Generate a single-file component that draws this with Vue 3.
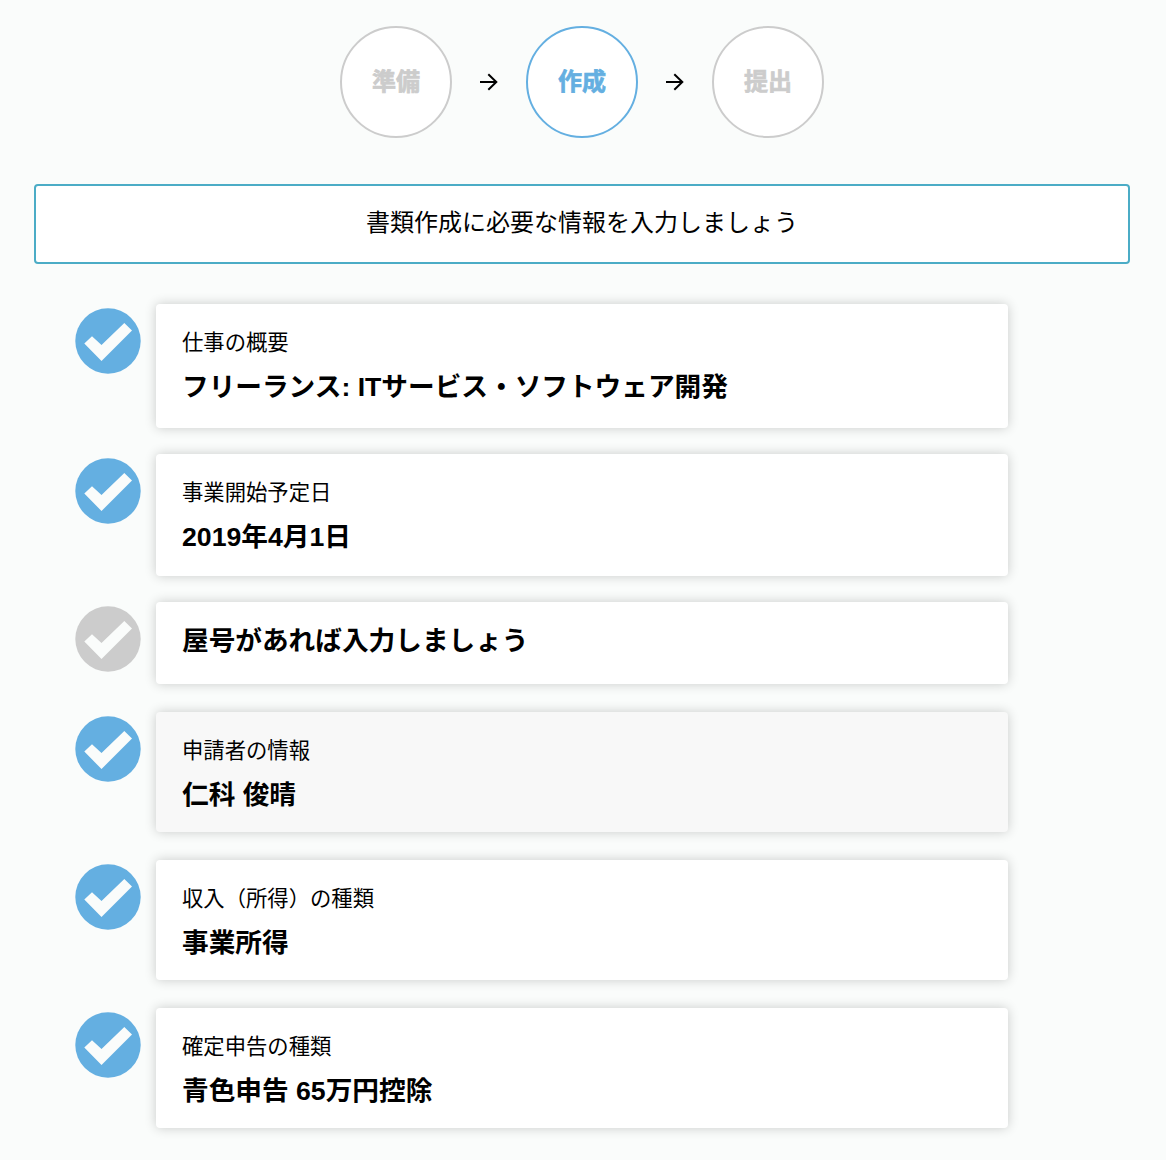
<script setup>
const steps = [
    { name: '準備', active: false },
    { name: '作成', active: true },
    { name: '提出', active: false },
];

// height: card height, gap: space to the next card
const items = [
    { label: '仕事の概要', value: 'フリーランス: ITサービス・ソフトウェア開発', done: true, height: 124, gap: 26 },
    { label: '事業開始予定日', value: '2019年4月1日', done: true, height: 122, gap: 26 },
    { label: '', value: '屋号があれば入力しましょう', done: false, height: 82, gap: 28 },
    { label: '申請者の情報', value: '仁科 俊晴', done: true, hover: true, height: 120, gap: 28 },
    { label: '収入（所得）の種類', value: '事業所得', done: true, height: 120, gap: 28 },
    { label: '確定申告の種類', value: '青色申告 65万円控除', done: true, height: 120, gap: 28 },
];
</script>

<template>
    <div class="page">
        <nav class="steps">
            <template v-for="(step, index) in steps" :key="step.name">
                <svg v-if="index > 0" class="arrow" viewBox="0 0 18 18">
                    <path d="M0 9H16.5M8.3 1.2L16.3 9L8.3 16.8" />
                </svg>
                <div class="step" :class="{ active: step.active }">{{ step.name }}</div>
            </template>
        </nav>

        <p class="message">書類作成に必要な情報を入力しましょう</p>

        <ul class="list">
            <li v-for="item in items" :key="item.value" class="item" :style="{ marginBottom: item.gap + 'px' }">
                <svg class="check" :class="{ done: item.done }" viewBox="0 0 66 66">
                    <circle cx="33" cy="33" r="32.7" />
                    <path d="M49.3 15L57 22.5L26.5 53L9.3 35.6L17 28.2L26.5 36.9Z" />
                </svg>
                <div class="card" :class="{ hover: item.hover }" :style="{ height: item.height + 'px' }">
                    <p v-if="item.label" class="label">{{ item.label }}</p>
                    <p class="value">{{ item.value }}</p>
                </div>
            </li>
        </ul>
    </div>
</template>

<style>
body {
    margin: 0;
    background-color: #fafcfb;
}
</style>

<style scoped>
.page {
    box-sizing: border-box;
    height: 1160px;
    padding: 26px 36px 0 34px;
    overflow: hidden;
    color: #000;
    font-family: 'Liberation Sans', 'Noto Sans CJK JP', sans-serif;
}

.steps {
    display: flex;
    align-items: center;
    justify-content: center;
}

.step {
    box-sizing: border-box;
    width: 112px;
    height: 112px;
    border: 2px solid #ccc;
    border-radius: 50%;
    background-color: #fff;
    color: #ccc;
    font-size: 24px;
    font-weight: bold;
    line-height: 108px;
    text-align: center;
    -webkit-text-stroke: 0.7px currentColor;
}

.step.active {
    border-color: #64afe1;
    color: #64afe1;
}

.arrow {
    width: 18px;
    height: 18px;
    margin: 0 28px;
    fill: none;
    stroke: #000;
    stroke-width: 2;
}

.message {
    box-sizing: border-box;
    height: 80px;
    margin: 46px 0 40px;
    border: 2px solid #4bacc6;
    border-radius: 4px;
    background-color: #fff;
    font-size: 24px;
    line-height: 74px;
    text-align: center;
}

.list {
    margin: 0;
    padding: 0 0 0 41px;
    list-style: none;
}

.item {
    display: flex;
    align-items: flex-start;
}

.check {
    flex: none;
    width: 66px;
    height: 66px;
    margin: 4px 15px 0 0;
    fill: #ccc;
}

.check.done {
    fill: #64afe1;
}

.check path {
    fill: #fafcfb;
}

.card {
    box-sizing: border-box;
    width: 852px;
    padding: 17px 26px 0;
    border-radius: 4px;
    background-color: #fff;
    box-shadow: 0 0 12px rgba(0, 0, 0, 0.2);
}

.card.hover {
    background-color: #f8f8f8;
}

.label,
.value {
    margin: 0;
    line-height: 44px;
    white-space: nowrap;
}

.label {
    font-size: 21.33px;
}

.value {
    font-size: 26.67px;
    font-weight: bold;
}
</style>
